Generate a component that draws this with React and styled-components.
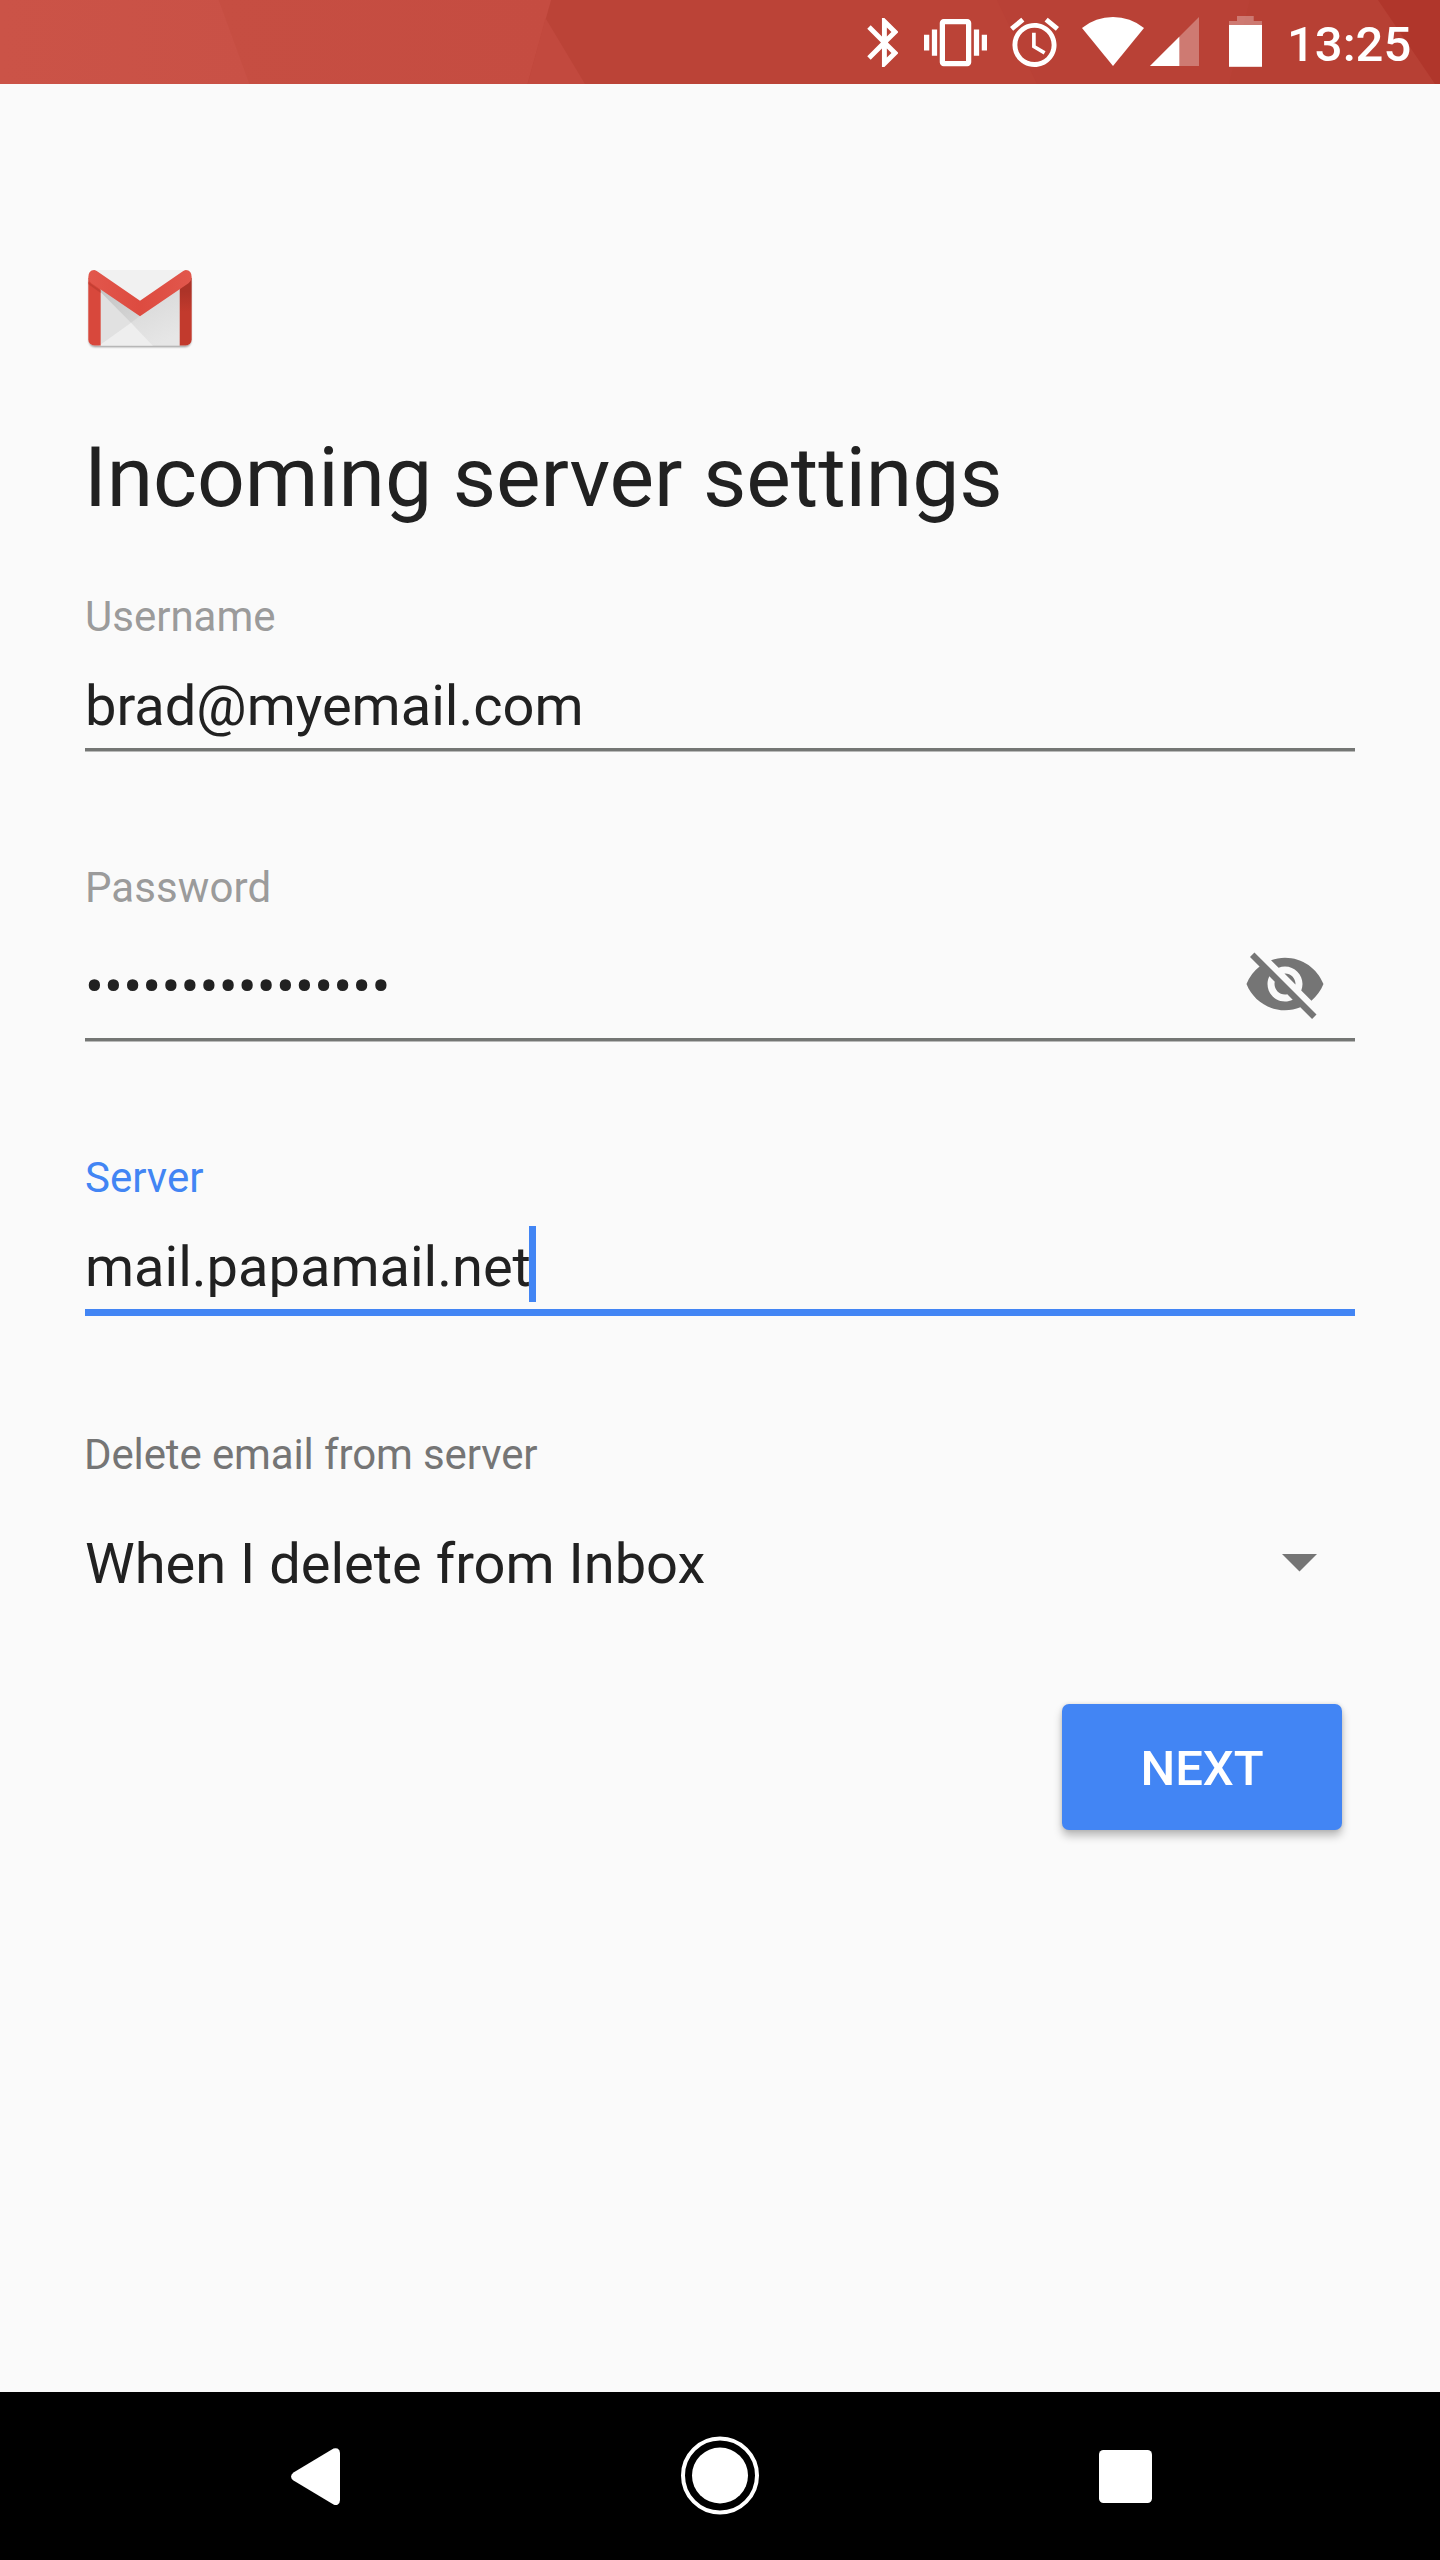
import React from 'react';
import styled, { createGlobalStyle } from 'styled-components';
import { MdVisibilityOff } from 'react-icons/md';

const GlobalStyle = createGlobalStyle`
  * {
    box-sizing: border-box;
  }

  body {
    margin: 0;
    background-color: #fafafa;
    font-family: Roboto, sans-serif;
    color: #212121;
  }
`

const Screen = styled.div`
  width: 1440px;
  height: 2560px;
  display: flex;
  flex-direction: column;
  background-color: #fafafa;
  overflow: hidden;
`

const StatusBar = styled.header`
  position: relative;
  height: 84px;
  flex: none;
  display: flex;
  justify-content: flex-end;
  padding-right: 28px;
  background-color: #bb4337;
`

const StatusBackground = styled.svg`
  position: absolute;
  top: 0;
  left: 0;
`

const StatusIcon = styled.svg`
  position: relative;
  flex: none;
  height: 84px;
  width: ${props => props.$width}px;
  margin-right: ${props => props.$gap}px;
  fill: #fff;
`

const Clock = styled.span`
  position: relative;
  width: 125px;
  padding-top: 3px;
  font-size: 49px;
  font-weight: 500;
  line-height: 84px;
  color: #fff;
`

const Content = styled.main`
  flex: 1;
  display: flex;
  flex-direction: column;
  padding: 182px 85px 0;
`

const Logo = styled.svg`
  display: block;
  flex: none;
  width: 110px;
  height: 84px;
`

const Title = styled.h1`
  margin: 79px 0 65px -1px;
  font-size: 84px;
  font-weight: 400;
  line-height: 98px;
  letter-spacing: -0.1px;
  white-space: nowrap;
`

const Field = styled.div`
  display: flex;
  flex-direction: column;
  margin-bottom: ${props => props.$space}px;
`

const Label = styled.label`
  font-size: 42px;
  line-height: 50px;
  letter-spacing: ${props => props.$tracking || 0}px;
  color: ${props => props.$color || '#9b9b9b'};
`

const SelectLabel = styled(Label)`
  margin-left: -1px;
  letter-spacing: -0.12px;
`

const InputRow = styled.div`
  display: flex;
  align-items: center;
  justify-content: space-between;
  margin-top: ${props => props.$top}px;
  padding-bottom: ${props => props.$bottom}px;
  border-bottom: ${props => props.$active ? '7px solid #4285f4' : '3px solid #747674'};
  box-shadow: ${props => props.$active ? 'none' : '0 1px 0 #b9bab9'};
`

const Value = styled.span`
  position: relative;
  font-size: 56px;
  line-height: 66px;
  white-space: nowrap;
`

const Dots = styled(Value)`
  padding-top: 5px;
  letter-spacing: 0.2px;
`

const Caret = styled.i`
  position: absolute;
  left: 444px;
  top: -8px;
  width: 7px;
  height: 76px;
  background-color: #4285f4;
`

const EyeIcon = styled(MdVisibilityOff)`
  display: block;
  width: 84px;
  height: 84px;
  margin-right: 28px;
  color: #757575;
`

const SelectRow = styled.div`
  display: flex;
  align-items: center;
  justify-content: space-between;
  margin-top: 51px;
  padding-right: 38px;
`

const Arrow = styled.svg`
  display: block;
  width: 35px;
  height: 18px;
  margin-bottom: 3px;
  fill: #757575;
`

const NextButton = styled.button`
  align-self: flex-end;
  width: 280px;
  height: 126px;
  margin-right: 13px;
  padding: 3px 0 0;
  border: none;
  border-radius: 7px;
  background-color: #4285f4;
  box-shadow: 0 6px 9px rgba(0, 0, 0, 0.25), 0 0 4px rgba(0, 0, 0, 0.12);
  font-family: inherit;
  font-size: 49px;
  font-weight: 500;
  line-height: 123px;
  color: #fff;
`

const NavBar = styled.nav`
  height: 168px;
  flex: none;
  display: flex;
  justify-content: space-between;
  padding: 0 288px 0 291px;
  background-color: #000;
`

const NavIcon = styled.svg`
  display: block;
  height: 168px;
  width: ${props => props.$width}px;
  fill: #fff;
`

const Status = () => {
  return (
    <StatusBar>
      <StatusBackground width="1440" height="84">
        <defs>
          <linearGradient id="left" x1="0" x2="1">
            <stop offset="0" stopColor="#cb5347" />
            <stop offset="1" stopColor="#c95146" />
          </linearGradient>
          <linearGradient id="middle" x1="0" x2="1">
            <stop offset="0" stopColor="#c64e42" />
            <stop offset="1" stopColor="#c54c41" />
          </linearGradient>
        </defs>
        <path d="M0 0H250V84H0Z" fill="url(#left)" />
        <path d="M218.6 0H551L527.6 84H249.3Z" fill="url(#middle)" />
        <path d="M545.5 18L585 84H527.6Z" fill="#c2493e" />
        <path d="M997 0H1440V84H1037Z" fill="#b94136" />
        <path d="M1250 0H1440V84H1229Z" fill="#b74034" />
        <path d="M1378 0H1440V84H1435Z" fill="#b0362b" />
      </StatusBackground>
      {/* bluetooth */}
      <StatusIcon $width={31} $gap={26} viewBox="0 0 31 84">
        <path transform="translate(-12 13.1) scale(2.45)" d="M17.71 7.71L12 2h-1v7.59L6.41 5 5 6.41 10.59 12 5 17.59 6.41 19 11 14.41V22h1l5.71-5.71-4.3-4.29 4.3-4.29zM13 5.83l1.88 1.88L13 9.59V5.83zm1.88 10.46L13 18.17v-3.76l1.88 1.88z" />
      </StatusIcon>
      {/* vibrate */}
      <StatusIcon $width={63} $gap={23} viewBox="0 0 63 84">
        <path transform="translate(0 11.1) scale(2.625)" d="M0 15h2V9H0v6zm3 2h2V7H3v10zm19-8v6h2V9h-2zm-3 8h2V7h-2v10zM16.5 3h-9C6.67 3 6 3.67 6 4.5v15c0 .83.67 1.5 1.5 1.5h9c.83 0 1.5-.67 1.5-1.5v-15c0-.83-.67-1.5-1.5-1.5zM16 19H8V5h8v14z" />
      </StatusIcon>
      {/* alarm */}
      <StatusIcon $width={49} $gap={23} viewBox="0 0 49 84">
        <path transform="translate(-4.9 13.1) scale(2.45)" d="M22 5.72l-4.6-3.86-1.29 1.53 4.6 3.86L22 5.72zM7.88 3.39L6.6 1.86 2 5.71l1.29 1.53 4.59-3.85zM12.5 8H11v6l4.75 2.85.75-1.23-4-2.37V8zM12 4c-4.97 0-9 4.03-9 9s4.02 9 9 9c4.97 0 9-4.03 9-9s-4.03-9-9-9zm0 16c-3.87 0-7-3.13-7-7s3.13-7 7-7 7 3.13 7 7-3.13 7-7 7z" />
      </StatusIcon>
      {/* wifi */}
      <StatusIcon $width={62} $gap={6} viewBox="0 0 62 84">
        <path d="M31 66L0 28A49 49 0 0 1 62 28Z" />
      </StatusIcon>
      {/* signal */}
      <StatusIcon $width={49} $gap={30} viewBox="0 0 49 84">
        <path d="M0 66L49 17V66Z" fillOpacity="0.3" />
        <path d="M0 66L29.3 36.7V66Z" />
      </StatusIcon>
      {/* battery */}
      <StatusIcon $width={33} $gap={25} viewBox="0 0 33 84">
        <path d="M8 16H24.7V21H33V25H0V21H8Z" fillOpacity="0.3" />
        <rect y="25" width="33" height="41.8" />
      </StatusIcon>
      <Clock>13:25</Clock>
    </StatusBar>
  );
}

const GmailLogo = () => {
  return (
    <Logo viewBox="0 0 110 84">
      <defs>
        <clipPath id="envelope">
          <rect x="3.3" y="4" width="103.4" height="75.5" rx="6" />
        </clipPath>
        <linearGradient id="fold" x1="0" x2="1" y1="0" y2="1">
          <stop offset="0" stopColor="#c4c4c4" />
          <stop offset="1" stopColor="#d6d6d6" />
        </linearGradient>
        <linearGradient id="paper" x1="0" x2="0.7" y1="0" y2="1">
          <stop offset="0" stopColor="#d2d2d2" />
          <stop offset="1" stopColor="#e6e6e6" />
        </linearGradient>
        <linearGradient id="flap" x1="0" x2="1" y1="0" y2="0">
          <stop offset="0" stopColor="#e2574c" />
          <stop offset="0.5" stopColor="#dd4b40" />
          <stop offset="1" stopColor="#e2574c" />
        </linearGradient>
        <linearGradient id="side" x1="0" x2="0" y1="0" y2="1">
          <stop offset="0.2" stopColor="#ad3328" />
          <stop offset="0.5" stopColor="#c23a2d" />
        </linearGradient>
        <filter id="soft" x="-10%" y="-10%" width="120%" height="130%">
          <feGaussianBlur stdDeviation="1.3" />
        </filter>
      </defs>
      <rect x="4" y="10" width="102" height="71" rx="6" fill="#000" opacity="0.4" filter="url(#soft)" />
      <g clipPath="url(#envelope)">
        <rect width="110" height="84" fill="#f1f1f1" />
        <path d="M15.7 22L55 49.5L94.7 22V80H15.7Z" fill="url(#paper)" />
        <path d="M15.7 26L46 56.7L15.7 78Z" fill="#e1e1e1" />
        <path d="M15.7 26L46 56.7L55 50L15.7 20Z" fill="url(#fold)" />
        <path d="M13.5 80L46 56.7L68 80Z" fill="#eeeeee" />
        <path d="M3 12H15.7V80H3Z" fill="#d8483c" />
        <path d="M94.7 12H107V80H94.7Z" fill="url(#side)" />
        <path d="M3 15.5L15.7 24.5V27L3 18Z" fill="#b93a2f" opacity="0.6" />
      </g>
      <path d="M3.3 11.5Q3.3 4.2 9.2 4Q10.7 4.2 12.5 5.5L55 34.8L97.5 5.5Q99.3 4.2 100.8 4Q106.7 4.2 106.7 11.5Q106.3 14.8 103.5 17.2L55 50.2L6.5 17.2Q3.7 14.8 3.3 11.5Z" fill="url(#flap)" />
    </Logo>
  );
}

const App = () => {
  return (
    <Screen>
      <GlobalStyle />
      <Status />
      <Content>
        <GmailLogo />
        <Title>Incoming server settings</Title>
        <Field $space={112}>
          <Label>Username</Label>
          <InputRow $top={31} $bottom={9}>
            <Value>brad@myemail.com</Value>
          </InputRow>
        </Field>
        <Field $space={112}>
          <Label $tracking={0.1}>Password</Label>
          <InputRow $top={29} $bottom={12}>
            <Dots>••••••••••••••••</Dots>
            <EyeIcon />
          </InputRow>
        </Field>
        <Field $space={114}>
          <Label $color="#4285f4">Server</Label>
          <InputRow $top={31} $bottom={9} $active>
            <Value>mail.papamail.net<Caret /></Value>
          </InputRow>
        </Field>
        <Field $space={107}>
          <SelectLabel $color="#757575">Delete email from server</SelectLabel>
          <SelectRow>
            <Value>When I delete from Inbox</Value>
            <Arrow viewBox="0 0 35 18">
              <path d="M0 0H35L17.5 17.5Z" />
            </Arrow>
          </SelectRow>
        </Field>
        <NextButton>NEXT</NextButton>
      </Content>
      <NavBar>
        <NavIcon $width={49} viewBox="0 0 49 168">
          <path d="M42.5 56.6Q44.5 55.7 46.5 56.6Q49 58 49 61V108Q49 111.5 46.5 112.7Q44.5 113.5 42.5 112.4L2.5 88.5Q0 86.7 0 84.5Q0 82.3 2.5 80.5Z" />
        </NavIcon>
        <NavIcon $width={80} viewBox="0 0 80 168">
          <circle cx="40" cy="83.5" r="37" fill="none" stroke="#fff" strokeWidth="4" />
          <circle cx="40" cy="83.5" r="28" />
        </NavIcon>
        <NavIcon $width={53} viewBox="0 0 53 168">
          <rect y="58" width="53" height="53" rx="4.5" />
        </NavIcon>
      </NavBar>
    </Screen>
  );
}

export default App;
